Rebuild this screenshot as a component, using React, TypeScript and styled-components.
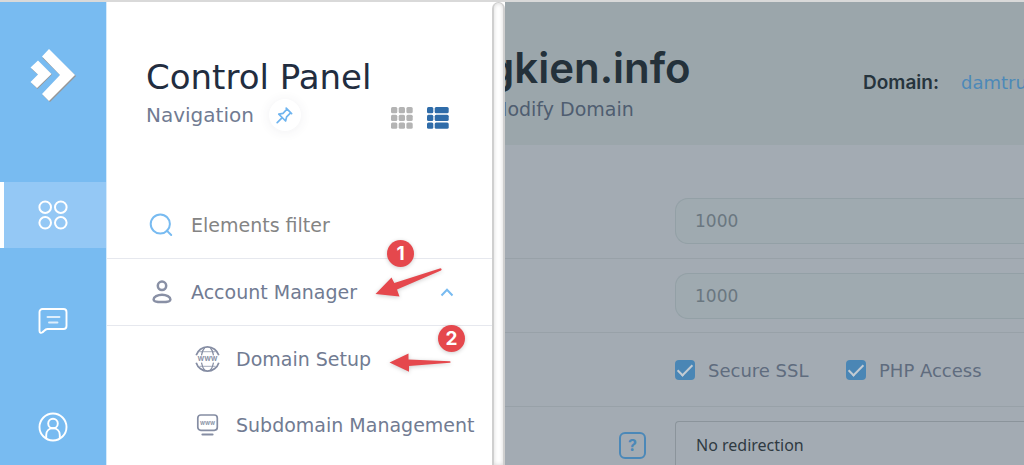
import React from "react";
import styled, { createGlobalStyle } from "styled-components";

const ink = "#222d3f";
const slate = "#717b92";
const sky = "#78bbf1";
const display = `Inter, "Liberation Sans", sans-serif`;

const GlobalStyle = createGlobalStyle`
  *, *::before, *::after { box-sizing: border-box; }
  body { margin: 0; }
  body, button, input, select { font-family: "DejaVu Sans", sans-serif; }
  h1, h2, p, ul { margin: 0; padding: 0; }
  svg { display: block; flex: none; }
`;

const Shell = styled.div`
  display: flex;
  height: 100vh;
  overflow: hidden;
  border-top: 2px solid #d9d9d9;
  background: #fff;
`;

/* ---------- icon rail ---------- */

const Rail = styled.nav`
  flex: none;
  width: 106px;
  background: ${sky};
`;

const Logo = styled.a`
  display: flex;
  justify-content: center;
  height: 180px;
  padding-top: 47px;
`;

const RailList = styled.ul`
  display: flex;
  flex-direction: column;
  gap: 40px;
  list-style: none;
`;

const RailButton = styled.button<{ $active?: boolean }>`
  display: flex;
  align-items: center;
  justify-content: center;
  width: 100%;
  height: 66px;
  padding: 0 4px 0 0;
  border: 0;
  border-left: 4px solid ${(p) => (p.$active ? "#fff" : "transparent")};
  background: ${(p) => (p.$active ? "#94c8f5" : "transparent")};
  color: #fff;
`;

/* ---------- navigation panel ---------- */

const Panel = styled.section`
  position: relative;
  flex: none;
  width: 386px;
  border-left: 1px solid #d5eafb;
  color: ${slate};
`;

const PanelHead = styled.header`
  height: 190px;
  padding: 52px 43px 0 39px;
`;

const PanelTitle = styled.h2`
  color: ${ink};
  font-size: 34px;
  font-weight: 400;
  line-height: 46px;
  white-space: nowrap;
`;

const PanelTools = styled.div`
  display: flex;
  align-items: center;
  height: 30px;
`;

const PanelSubtitle = styled.p`
  font-size: 20px;
  line-height: 30px;
`;

const PinButton = styled.button`
  display: flex;
  align-items: center;
  justify-content: center;
  width: 32px;
  height: 32px;
  margin-left: 15px;
  padding: 0;
  border: 0;
  border-radius: 50%;
  background: #fff;
  box-shadow: 0 1px 12px rgba(60, 70, 90, 0.08);
`;

const ViewSwitch = styled.div`
  display: flex;
  gap: 14px;
  margin: 6px 0 0 auto;
`;

const ViewButton = styled.button<{ $active?: boolean }>`
  padding: 0;
  border: 0;
  background: none;
  color: ${(p) => (p.$active ? "#2f6ca9" : "#b4b4b4")};
`;

const FilterRow = styled.label`
  display: flex;
  align-items: center;
  height: 67px;
  padding: 0 40px 0 42px;
  border-bottom: 1px solid #e6e8ee;
`;

const FilterInput = styled.input`
  flex: 1;
  min-width: 0;
  margin-left: 18px;
  padding: 0;
  border: 0;
  outline: 0;
  background: none;
  font-size: 19px;
  &::placeholder { color: #848484; opacity: 1; }
`;

const GroupButton = styled.button`
  display: flex;
  align-items: center;
  width: 100%;
  height: 67px;
  padding: 0 38px 0 44px;
  border: 0;
  border-bottom: 1px solid #e6e8ee;
  background: none;
  color: ${slate};
  font-size: 19px;
  & > span { flex: 1; margin-left: 18px; text-align: left; }
`;

const SubList = styled.ul`
  list-style: none;
`;

const SubLink = styled.a`
  display: flex;
  align-items: center;
  gap: 16px;
  height: 66px;
  padding-left: 88px;
  color: ${slate};
  font-size: 19px;
  text-decoration: none;
  white-space: nowrap;
`;

const ScrollTrack = styled.div`
  flex: none;
  width: 13px;
  border: 1px solid #cfcfcf;
  border-width: 1px 2px 0 2px;
  border-radius: 7px 7px 0 0;
  background: #fff;
  box-shadow: inset 0 0 4px rgba(0, 0, 0, 0.16);
`;

/* ---------- numbered callouts ---------- */

const Badge = styled.span<{ $x: number; $y: number }>`
  position: absolute;
  left: ${(p) => p.$x}px;
  top: ${(p) => p.$y}px;
  width: 27px;
  height: 27px;
  border-radius: 50%;
  background: #e5484d;
  box-shadow: 0 1px 4px rgba(0, 0, 0, 0.2);
  color: #fff;
  font-family: ${display};
  font-size: 19px;
  font-weight: 700;
  line-height: 27px;
  text-align: center;
`;

const Arrow = styled.svg<{ $x: number; $y: number }>`
  position: absolute;
  left: ${(p) => p.$x}px;
  top: ${(p) => p.$y}px;
  fill: #e5484d;
  filter: drop-shadow(0 1px 2px rgba(0, 0, 0, 0.2));
  overflow: visible;
`;

/* ---------- dimmed page ---------- */

const Main = styled.main`
  flex: 1;
  min-width: 0;
  overflow: hidden;
  background: #a3abb3;
`;

const PageHead = styled.header`
  display: flex;
  justify-content: space-between;
  height: 143px;
  background: #9ba6ab;
  white-space: nowrap;
`;

const Heading = styled.div`
  margin-left: -17px;
  padding-top: 40px;
`;

const PageTitle = styled.h1`
  color: #24313a;
  font-family: ${display};
  font-size: 42px;
  font-weight: 600;
  line-height: 52px;
`;

const Crumb = styled.p`
  padding: 3px 0 0 3px;
  color: #4f5d70;
  font-size: 19px;
  line-height: 24px;
`;

const DomainInfo = styled.p`
  flex: none;
  display: grid;
  grid-template-columns: 98px 1fr;
  align-items: start;
  width: 161px;
  padding-top: 69px;
  font-size: 18px;
  line-height: 24px;
  & > strong { color: #26343d; font-family: ${display}; font-size: 19px; font-weight: 600; }
  & > a { color: #4d89b8; text-decoration: none; }
`;

const Row = styled.div<{ $first?: boolean }>`
  display: grid;
  grid-template-columns: 170px 1fr;
  align-items: center;
  min-height: 74px;
  padding: ${(p) => (p.$first ? "53px 0 14px" : "14px 0 13px")};
  border-bottom: 1px solid #98a1a8;
`;

const LimitInput = styled.input`
  grid-column: 2;
  width: 100%;
  height: 46px;
  padding: 0 19px;
  border: 1px solid #93a0a6;
  border-right: 0;
  border-radius: 13px 0 0 13px;
  background: #9faab0;
  color: #6a7780;
  font-size: 17px;
`;

const Checks = styled.div`
  grid-column: 2;
  display: grid;
  grid-template-columns: 171px 1fr;
`;

const CheckLabel = styled.label`
  display: flex;
  align-items: center;
  gap: 13px;
  color: #5f6c7e;
  font-size: 18px;
  white-space: nowrap;
`;

const CheckBox = styled.input`
  appearance: none;
  display: grid;
  place-items: center;
  width: 20px;
  height: 20px;
  margin: 0;
  border-radius: 4px;
  background: #4a86b5;
  &:checked::after {
    content: "";
    width: 8px;
    height: 15px;
    margin-bottom: 3px;
    border: solid #c3cbd2;
    border-width: 0 2px 2px 0;
    transform: rotate(45deg);
  }
`;

const HelpButton = styled.button`
  justify-self: end;
  width: 27px;
  height: 27px;
  margin-right: 29px;
  padding: 0;
  border: 2px solid #4b88b8;
  border-radius: 6px;
  background: none;
  color: #4b88b8;
  font-family: ${display};
  font-size: 16px;
  font-weight: 700;
  line-height: 22px;
`;

const Redirect = styled.select`
  appearance: none;
  width: 100%;
  height: 48px;
  padding: 0 20px;
  border: 1px solid #8b949b;
  border-right: 0;
  border-radius: 4px 0 0 4px;
  background: #a3abb3;
  color: #2f3a42;
  font-family: "Noto Sans", "Open Sans", sans-serif;
  font-size: 16px;
`;

/* ---------- drawings ---------- */

const LogoMark = () => (
  <svg width="46" height="53" viewBox="0 0 46 53">
    <g fill="#979797">
      <path d="M19.5 1.5 46 27 20 53 12.500 46 31 27 12.500 9z" />
      <path d="M8.500 13 22 25.500 7.500 40 1.500 34 8.500 26 1.500 20z" />
    </g>
    <g fill="#fff">
      <path d="M19 0 45 26 19 52 12 45 30 26 12 7.500z" />
      <path d="M8 11.500 21.500 25 7 39 .5 33 8 25.500 .5 18.500z" />
    </g>
  </svg>
);

const CirclesIcon = () => (
  <svg width="30" height="30" fill="none" stroke="currentColor" strokeWidth="2">
    <circle cx="7.200" cy="7.200" r="5.800" />
    <circle cx="22.800" cy="7.200" r="5.800" />
    <circle cx="7.200" cy="22.800" r="5.800" />
    <circle cx="22.800" cy="22.800" r="5.800" />
  </svg>
);

const ChatIcon = () => (
  <svg width="30" height="28" fill="none" stroke="currentColor" strokeWidth="1.900" strokeLinecap="round" strokeLinejoin="round">
    <path d="M4.500 2h21a3 3 0 0 1 3 3v14a3 3 0 0 1-3 3H9.500c-2 0-3 1.500-5 3.300-1.300 1-3 .6-3-1.300V5a3 3 0 0 1 3-3z" />
    <path d="M9.500 10h12M11 15.500h8.500" opacity=".75" />
  </svg>
);

const ProfileIcon = () => (
  <svg width="30" height="30" fill="none" stroke="currentColor" strokeWidth="1.900">
    <circle cx="15" cy="15" r="13.500" />
    <circle cx="15" cy="11.500" r="4.800" />
    <path d="M8.200 26.500v-3.500c0-4 2.800-6.700 6.800-6.700s6.800 2.700 6.800 6.700v3.500" />
  </svg>
);

const PinIcon = () => (
  <svg width="17" height="17" fill="none" stroke="#6fb4ef" strokeWidth="1.700" strokeLinecap="round" strokeLinejoin="round">
    <path d="M10.200 1.200 15.600 6.600M11 2.200 7 6.300 2.800 7.200 9.600 14l1-4.100 4-4M6.200 10.600 1.200 15.600" />
  </svg>
);

const starts = [0, 7.7, 15.4];

const TilesIcon = () => (
  <svg width="22" height="22" fill="currentColor">
    {starts.map((y) => starts.map((x) => <rect key={`${x}-${y}`} x={x} y={y} width="6.300" height="6.300" rx="1.500" />))}
  </svg>
);

const ListIcon = () => (
  <svg width="22" height="22" fill="currentColor">
    {starts.map((y) => (
      <React.Fragment key={y}>
        <rect y={y} width="6.300" height="6.300" rx="1.500" />
        <rect x="7.700" y={y} width="14" height="6.300" rx="1.500" />
      </React.Fragment>
    ))}
  </svg>
);

const SearchIcon = () => (
  <svg width="24" height="24" fill="none" stroke={sky} strokeWidth="2" strokeLinecap="round">
    <circle cx="11.300" cy="11" r="9.600" />
    <path d="m17.800 17.600 4.400 4.400" />
  </svg>
);

const AccountIcon = () => (
  <svg width="22" height="24" fill="none" stroke="#8990a5" strokeWidth="2.500">
    <circle cx="11" cy="5.800" r="4.200" />
    <path d="M11 14.800c4.500 0 8.400 2.200 8.400 4.600 0 2-4 2.700-8.400 2.700s-8.400-.7-8.400-2.700c0-2.400 3.900-4.600 8.400-4.600z" />
  </svg>
);

const ChevronIcon = () => (
  <svg width="14" height="10" fill="none" stroke={sky} strokeWidth="2">
    <path d="M1.500 8.500 7 2.700 12.500 8.500" />
  </svg>
);

const IconLabel = styled.text`
  fill: #858da3;
  stroke: none;
  font-family: Inter, sans-serif;
  font-weight: 600;
  text-anchor: middle;
`;

const GlobeIcon = () => (
  <svg width="25" height="26" fill="none" stroke="#858da3" strokeWidth="1.700">
    <path d="M1.200 9.300A11.800 11.800 0 0 1 23.800 9.300M1.200 16.700A11.800 11.800 0 0 0 23.800 16.700" />
    <g strokeWidth="1.200">
      <path d="M4.500 5.600h16M4.500 20.400h16" opacity=".6" />
      <path d="M9.800 1.500C8 3.500 7 6 6.500 9.300M15.200 1.500C17 3.500 18 6 18.500 9.300M9.800 24.500C8 22.500 7 20 6.500 16.700M15.200 24.500C17 22.500 18 20 18.500 16.700" />
    </g>
    <IconLabel x="12.500" y="15.400" fontSize="8">www</IconLabel>
  </svg>
);

const ScreenIcon = () => (
  <svg width="25" height="24" fill="none" stroke="#858da3" strokeWidth="1.700" strokeLinecap="round">
    <rect x="2.800" y="2" width="19.500" height="15.300" rx="3" />
    <path d="M7.500 21.500h10" strokeWidth="2.200" />
    <IconLabel x="12.500" y="11.500" fontSize="6">www</IconLabel>
  </svg>
);

/* ---------- page ---------- */

const railItems = [
  { name: "Dashboard", icon: <CirclesIcon />, active: true },
  { name: "Messages", icon: <ChatIcon /> },
  { name: "Profile", icon: <ProfileIcon /> },
];

const subItems = [
  { name: "Domain Setup", icon: <GlobeIcon /> },
  { name: "Subdomain Management", icon: <ScreenIcon /> },
];

export default function App() {
  return (
    <Shell>
      <GlobalStyle />
      <Rail>
        <Logo href="#" aria-label="Home"><LogoMark /></Logo>
        <RailList>
          {railItems.map((item) => (
            <li key={item.name}>
              <RailButton $active={item.active} aria-label={item.name}>{item.icon}</RailButton>
            </li>
          ))}
        </RailList>
      </Rail>

      <Panel>
        <PanelHead>
          <PanelTitle>Control Panel</PanelTitle>
          <PanelTools>
            <PanelSubtitle>Navigation</PanelSubtitle>
            <PinButton aria-label="Pin panel"><PinIcon /></PinButton>
            <ViewSwitch>
              <ViewButton aria-label="Grid view"><TilesIcon /></ViewButton>
              <ViewButton $active aria-label="List view"><ListIcon /></ViewButton>
            </ViewSwitch>
          </PanelTools>
        </PanelHead>
        <FilterRow>
          <SearchIcon />
          <FilterInput type="text" placeholder="Elements filter" aria-label="Elements filter" />
        </FilterRow>
        <GroupButton aria-expanded="true">
          <AccountIcon />
          <span>Account Manager</span>
          <ChevronIcon />
        </GroupButton>
        <SubList>
          {subItems.map((item) => (
            <li key={item.name}>
              <SubLink href="#">{item.icon}{item.name}</SubLink>
            </li>
          ))}
        </SubList>
        <Badge $x={280} $y={238}>1</Badge>
        <Arrow $x={268} $y={265} width="67" height="30">
          <path d="M0.500 27 16.500 10.500 19.300 16 65.500 1.300Q67.500 2 66 3.500L22 22.500 24.500 29.500z" />
        </Arrow>
        <Badge $x={331} $y={323}>2</Badge>
        <Arrow $x={282} $y={351} width="62" height="20">
          <path d="M0.500 9.500 19.500 .5V6.500L61 8.200Q62.300 9 61 9.800L20 13V18.800z" />
        </Arrow>
      </Panel>
      <ScrollTrack />

      <Main>
        <PageHead>
          <Heading>
            <PageTitle>gkien.info</PageTitle>
            <Crumb>Modify Domain</Crumb>
          </Heading>
          <DomainInfo>
            <strong>Domain:</strong>
            <a href="#">damtru</a>
          </DomainInfo>
        </PageHead>
        <Row $first>
          <LimitInput type="text" defaultValue="1000" aria-label="Bandwidth" />
        </Row>
        <Row>
          <LimitInput type="text" defaultValue="1000" aria-label="Disk space" />
        </Row>
        <Row>
          <Checks>
            <CheckLabel><CheckBox type="checkbox" defaultChecked />Secure SSL</CheckLabel>
            <CheckLabel><CheckBox type="checkbox" defaultChecked />PHP Access</CheckLabel>
          </Checks>
        </Row>
        <Row>
          <HelpButton aria-label="Help">?</HelpButton>
          <Redirect aria-label="Redirection"><option>No redirection</option></Redirect>
        </Row>
      </Main>
    </Shell>
  );
}
